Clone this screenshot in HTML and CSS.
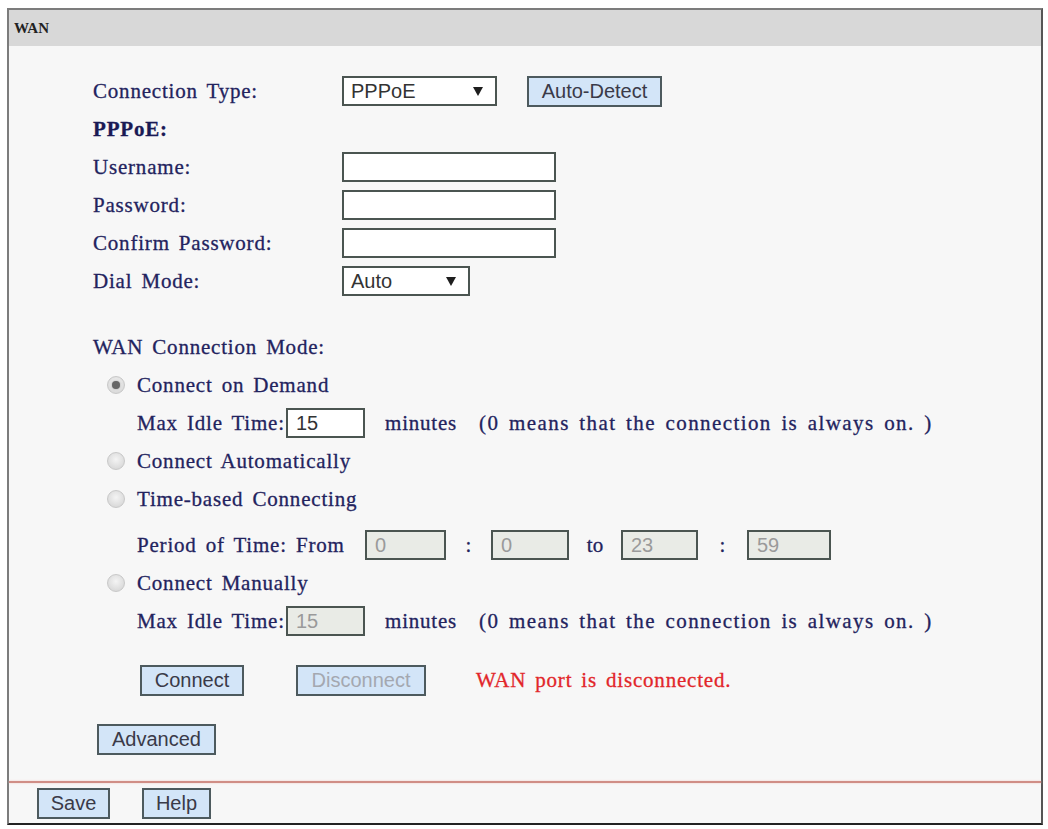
FILE: index.html
```html
<!DOCTYPE html>
<html lang="en">
<head>
	<meta charset="UTF-8">
	<title>WAN</title>
	<link rel="stylesheet" href="styles.css">
</head>
<body>
	<div class="panel">
		<div class="panelHead">WAN</div>
		<div class="panelBody">
			<div class="row">
				<span class="label">Connection Type:</span>
				<div class="select typeSelect"><span>PPPoE</span><span class="arrow"></span></div>
				<button class="btn detectBtn">Auto-Detect</button>
			</div>
			<div class="row">
				<span class="label strong">PPPoE:</span>
			</div>
			<div class="row">
				<span class="label">Username:</span>
				<input type="text" class="field wide">
			</div>
			<div class="row">
				<span class="label">Password:</span>
				<input type="password" class="field wide">
			</div>
			<div class="row">
				<span class="label">Confirm Password:</span>
				<input type="password" class="field wide">
			</div>
			<div class="row">
				<span class="label">Dial Mode:</span>
				<div class="select dialSelect"><span>Auto</span><span class="arrow"></span></div>
			</div>

			<div class="row modeTitle">
				<span class="text">WAN Connection Mode:</span>
			</div>
			<div class="row radioRow">
				<span class="radio checked"></span>
				<span class="text">Connect on Demand</span>
			</div>
			<div class="row subRow">
				<span class="text subLabel">Max Idle Time:</span>
				<input type="text" class="field short" value="15">
				<span class="text minutes">minutes</span>
				<span class="text note">(0 means that the connection is always on. )</span>
			</div>
			<div class="row radioRow">
				<span class="radio"></span>
				<span class="text">Connect Automatically</span>
			</div>
			<div class="row radioRow">
				<span class="radio"></span>
				<span class="text">Time-based Connecting</span>
			</div>
			<div class="row subRow periodRow">
				<span class="text periodLabel">Period of Time: From</span>
				<input type="text" class="field off p1" value="0" disabled>
				<span class="text sep s1">:</span>
				<input type="text" class="field off p2" value="0" disabled>
				<span class="text sep s2">to</span>
				<input type="text" class="field off p3" value="23" disabled>
				<span class="text sep s3">:</span>
				<input type="text" class="field off p4" value="59" disabled>
			</div>
			<div class="row radioRow">
				<span class="radio"></span>
				<span class="text">Connect Manually</span>
			</div>
			<div class="row subRow">
				<span class="text subLabel">Max Idle Time:</span>
				<input type="text" class="field short off" value="15" disabled>
				<span class="text minutes">minutes</span>
				<span class="text note">(0 means that the connection is always on. )</span>
			</div>
			<div class="row actions">
				<button class="btn connectBtn">Connect</button>
				<button class="btn disconnectBtn" disabled>Disconnect</button>
				<span class="text status">WAN port is disconnected.</span>
			</div>
			<div class="row advanced">
				<button class="btn advancedBtn">Advanced</button>
			</div>
		</div>
		<div class="rule"></div>
		<div class="panelFoot">
			<button class="btn saveBtn">Save</button>
			<button class="btn helpBtn">Help</button>
		</div>
	</div>
</body>
</html>
```

FILE: styles.css
```css
* {
	box-sizing: border-box;
}
html, body {
	margin: 0;
	padding: 0;
	background: #fff;
}
.panel {
	margin: 8px 0 0 7px;
	width: 1036px;
	height: 817px;
	border: 2px solid #7c7c7c;
	border-right-color: #555;
	border-bottom-color: #222;
	background: #f7f7f7;
	display: flex;
	flex-direction: column;
}
.panelHead {
	height: 36px;
	padding-left: 5px;
	display: flex;
	align-items: center;
	background: #d8d8d8;
	color: #222;
	font: bold 15px "Liberation Serif", serif;
}
.panelBody {
	flex: 1;
	padding: 26px 0 0 84px;
}
.row {
	display: flex;
	align-items: center;
	height: 38px;
}
.label, .text {
	font-family: "Liberation Serif", serif;
	font-size: 21px;
	letter-spacing: 0.8px;
	word-spacing: 3px;
	color: #23235e;
	-webkit-text-stroke: 0.3px;
	white-space: nowrap;
}
.label {
	width: 249px;
}
.strong {
	font-weight: bold;
	color: #1a1a55;
}

/* form controls */
.field {
	height: 30px;
	border: 2px solid #4b5551;
	background: #fff;
	padding: 0 8px;
	font: 20px "Liberation Sans", sans-serif;
	color: #333;
	outline: none;
}
.field.wide {
	width: 214px;
}
.field.short {
	width: 79px;
}
.field.off {
	background: #e9ebe6;
	color: #9a9a9a;
}
.select {
	height: 30px;
	border: 2px solid #4b5551;
	background: #fff;
	padding: 0 12px 0 7px;
	display: flex;
	align-items: center;
	justify-content: space-between;
	font: 20px "Liberation Sans", sans-serif;
	color: #333;
}
.typeSelect {
	width: 155px;
}
.dialSelect {
	width: 128px;
}
.arrow {
	width: 0;
	height: 0;
	border-left: 5px solid transparent;
	border-right: 5px solid transparent;
	border-top: 9px solid #1e1e1e;
}
.btn {
	height: 31px;
	padding: 0;
	border: 2px solid #4d5a5e;
	background: #d3e5f8;
	font: 20px "Liberation Sans", sans-serif;
	color: #3a3a48;
	text-align: center;
}
.btn:disabled {
	color: #a4a8b0;
}
.detectBtn {
	width: 135px;
	margin-left: 30px;
}

/* connection mode */
.modeTitle {
	margin-top: 28px;
}
.radioRow {
	padding-left: 14px;
}
.radio {
	width: 18px;
	height: 18px;
	margin-right: 12px;
	border-radius: 50%;
	border: 1px solid #c8c8c8;
	background: radial-gradient(circle at 50% 40%, #f4f4f4 0%, #d8d8d8 80%);
	display: flex;
	align-items: center;
	justify-content: center;
}
.radio.checked::after {
	content: "";
	width: 8px;
	height: 8px;
	border-radius: 50%;
	background: #666;
	box-shadow: 0 0 2px #999;
}
.subRow {
	padding-left: 44px;
}
.subLabel {
	width: 149px;
}
.minutes {
	margin-left: 20px;
}
.note {
	margin-left: 22px;
	letter-spacing: 1.4px;
}
.periodRow {
	margin-top: 8px;
}
.periodLabel {
	width: 228px;
}
.sep {
	text-align: center;
	letter-spacing: 0;
}
.p1 { width: 81px; }
.p2 { width: 78px; }
.p3 { width: 77px; }
.p4 { width: 84px; }
.s1 { width: 45px; }
.s2 { width: 52px; }
.s3 { width: 49px; }

.actions {
	margin-top: 21px;
	padding-left: 47px;
}
.connectBtn {
	width: 104px;
}
.disconnectBtn {
	width: 130px;
	margin-left: 52px;
}
.status {
	margin-left: 50px;
	color: #e2262a;
}
.advanced {
	margin-top: 21px;
	padding-left: 4px;
}
.advancedBtn {
	width: 119px;
}

/* footer */
.rule {
	height: 2px;
	background: #d08e86;
	box-shadow: 0 0 2px #f0c4be;
}
.panelFoot {
	height: 40px;
	padding-left: 28px;
	display: flex;
	align-items: center;
}
.saveBtn {
	width: 73px;
}
.helpBtn {
	width: 69px;
	margin-left: 32px;
}
```
